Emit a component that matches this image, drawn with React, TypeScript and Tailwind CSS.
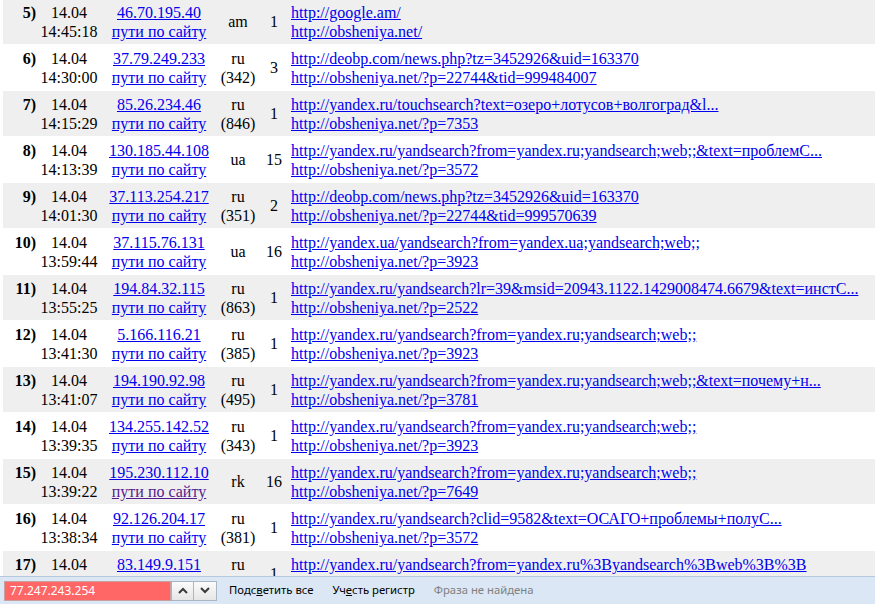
import React from "react";

type Row = {
  n: string;
  date: string;
  time: string;
  ip: string;
  visited?: boolean;
  cc: string;
  ccn?: string;
  cnt: string;
  u1: string;
  u2: string;
};

const rows: Row[] = [
  { n: "5)", date: "14.04", time: "14:45:18", ip: "46.70.195.40", cc: "am", cnt: "1", u1: "http://google.am/", u2: "http://obsheniya.net/" },
  { n: "6)", date: "14.04", time: "14:30:00", ip: "37.79.249.233", cc: "ru", ccn: "(342)", cnt: "3", u1: "http://deobp.com/news.php?tz=3452926&uid=163370", u2: "http://obsheniya.net/?p=22744&tid=999484007" },
  { n: "7)", date: "14.04", time: "14:15:29", ip: "85.26.234.46", cc: "ru", ccn: "(846)", cnt: "1", u1: "http://yandex.ru/touchsearch?text=озеро+лотусов+волгоград&l...", u2: "http://obsheniya.net/?p=7353" },
  { n: "8)", date: "14.04", time: "14:13:39", ip: "130.185.44.108", cc: "ua", cnt: "15", u1: "http://yandex.ru/yandsearch?from=yandex.ru;yandsearch;web;;&text=проблемС...", u2: "http://obsheniya.net/?p=3572" },
  { n: "9)", date: "14.04", time: "14:01:30", ip: "37.113.254.217", cc: "ru", ccn: "(351)", cnt: "2", u1: "http://deobp.com/news.php?tz=3452926&uid=163370", u2: "http://obsheniya.net/?p=22744&tid=999570639" },
  { n: "10)", date: "14.04", time: "13:59:44", ip: "37.115.76.131", cc: "ua", cnt: "16", u1: "http://yandex.ua/yandsearch?from=yandex.ua;yandsearch;web;;", u2: "http://obsheniya.net/?p=3923" },
  { n: "11)", date: "14.04", time: "13:55:25", ip: "194.84.32.115", cc: "ru", ccn: "(863)", cnt: "1", u1: "http://yandex.ru/yandsearch?lr=39&msid=20943.1122.1429008474.6679&text=инстС...", u2: "http://obsheniya.net/?p=2522" },
  { n: "12)", date: "14.04", time: "13:41:30", ip: "5.166.116.21", cc: "ru", ccn: "(385)", cnt: "1", u1: "http://yandex.ru/yandsearch?from=yandex.ru;yandsearch;web;;", u2: "http://obsheniya.net/?p=3923" },
  { n: "13)", date: "14.04", time: "13:41:07", ip: "194.190.92.98", cc: "ru", ccn: "(495)", cnt: "1", u1: "http://yandex.ru/yandsearch?from=yandex.ru;yandsearch;web;;&text=почему+н...", u2: "http://obsheniya.net/?p=3781" },
  { n: "14)", date: "14.04", time: "13:39:35", ip: "134.255.142.52", cc: "ru", ccn: "(343)", cnt: "1", u1: "http://yandex.ru/yandsearch?from=yandex.ru;yandsearch;web;;", u2: "http://obsheniya.net/?p=3923" },
  { n: "15)", date: "14.04", time: "13:39:22", ip: "195.230.112.10", visited: true, cc: "rk", cnt: "16", u1: "http://yandex.ru/yandsearch?from=yandex.ru;yandsearch;web;;", u2: "http://obsheniya.net/?p=7649" },
  { n: "16)", date: "14.04", time: "13:38:34", ip: "92.126.204.17", cc: "ru", ccn: "(381)", cnt: "1", u1: "http://yandex.ru/yandsearch?clid=9582&text=ОСАГО+проблемы+полуС...", u2: "http://obsheniya.net/?p=3572" },
  { n: "17)", date: "14.04", time: "13:37:51", ip: "83.149.9.151", cc: "ru", ccn: "(358)", cnt: "1", u1: "http://yandex.ru/yandsearch?from=yandex.ru%3Byandsearch%3Bweb%3B%3B", u2: "http://obsheniya.net/?p=3923" },
];

function TableRow({ r, i }: { r: Row; i: number }) {
  const bg = i % 2 === 0 ? "bg-[#efefef]" : "bg-white";
  return (
    <div className={`flex h-[45px] mt-[1px] ml-[3px] ${bg} leading-[19px] text-[16px] text-black`}>
      <div className="w-[35px] shrink-0 pt-[4px] pr-[2px] text-right font-bold">{r.n}</div>
      <div className="w-[62px] shrink-0 pt-[4px] text-center flex flex-col">
        <span>{r.date}</span>
        <span>{r.time}</span>
      </div>
      <div className="w-[118px] shrink-0 pt-[4px] text-center flex flex-col items-center">
        <a className="underline text-[#0000ee]">{r.ip}</a>
        <a className={`underline ${r.visited ? "text-[#551a8b]" : "text-[#0000ee]"}`}>пути по сайту</a>
      </div>
      <div className="w-[40px] shrink-0 flex flex-col items-center justify-center">
        <span>{r.cc}</span>
        {r.ccn && <span>{r.ccn}</span>}
      </div>
      <div className="w-[32px] shrink-0 flex items-center justify-center">{r.cnt}</div>
      <div className="pt-[4px] pl-[1px] flex flex-col items-start whitespace-nowrap">
        <a className="underline text-[#0000ee]">{r.u1}</a>
        <a className="underline text-[#0000ee]">{r.u2}</a>
      </div>
    </div>
  );
}

export default function App() {
  return (
    <div
      className="w-[875px] h-[604px] overflow-hidden flex flex-col bg-white"
      style={{ fontFamily: '"Liberation Serif", "Times New Roman", serif' }}
    >
      <div className="flex-1 overflow-hidden">
        <div className="-mt-[2px]">
          {rows.map((r, i) => (
            <TableRow key={r.n} r={r} i={i} />
          ))}
        </div>
      </div>
      <div
        className="h-[28px] shrink-0 border-t border-[#b5c8de] bg-[#dbe7f4] flex items-center pl-[4px] text-[11.3px] text-black"
        style={{ fontFamily: '"Noto Sans", "Open Sans", sans-serif' }}
      >
        <div className="h-[20px] w-[167px] bg-[#ff6666] border border-[#c9a0a0] text-white flex items-center pl-[5px] text-[12px]">
          77.247.243.254
        </div>
        <div className="h-[20px] w-[23px] border border-[#a9b6c6] bg-gradient-to-b from-[#fbfbfb] to-[#e6e6e6] flex items-center justify-center">
          <svg width="10" height="7" viewBox="0 0 10 7">
            <path d="M1 6 L5 2 L9 6" fill="none" stroke="#3a3a3a" strokeWidth="2" />
          </svg>
        </div>
        <div className="h-[20px] w-[23px] border border-l-0 border-[#a9b6c6] bg-gradient-to-b from-[#fbfbfb] to-[#e6e6e6] flex items-center justify-center">
          <svg width="10" height="7" viewBox="0 0 10 7">
            <path d="M1 1 L5 5 L9 1" fill="none" stroke="#3a3a3a" strokeWidth="2" />
          </svg>
        </div>
        <span className="ml-[12px] whitespace-nowrap">
          Подс<u>в</u>етить все
        </span>
        <span className="ml-[19px] whitespace-nowrap">
          Уч<u>е</u>сть регистр
        </span>
        <span className="ml-[19px] whitespace-nowrap text-[#808080]">Фраза не найдена</span>
      </div>
    </div>
  );
}
